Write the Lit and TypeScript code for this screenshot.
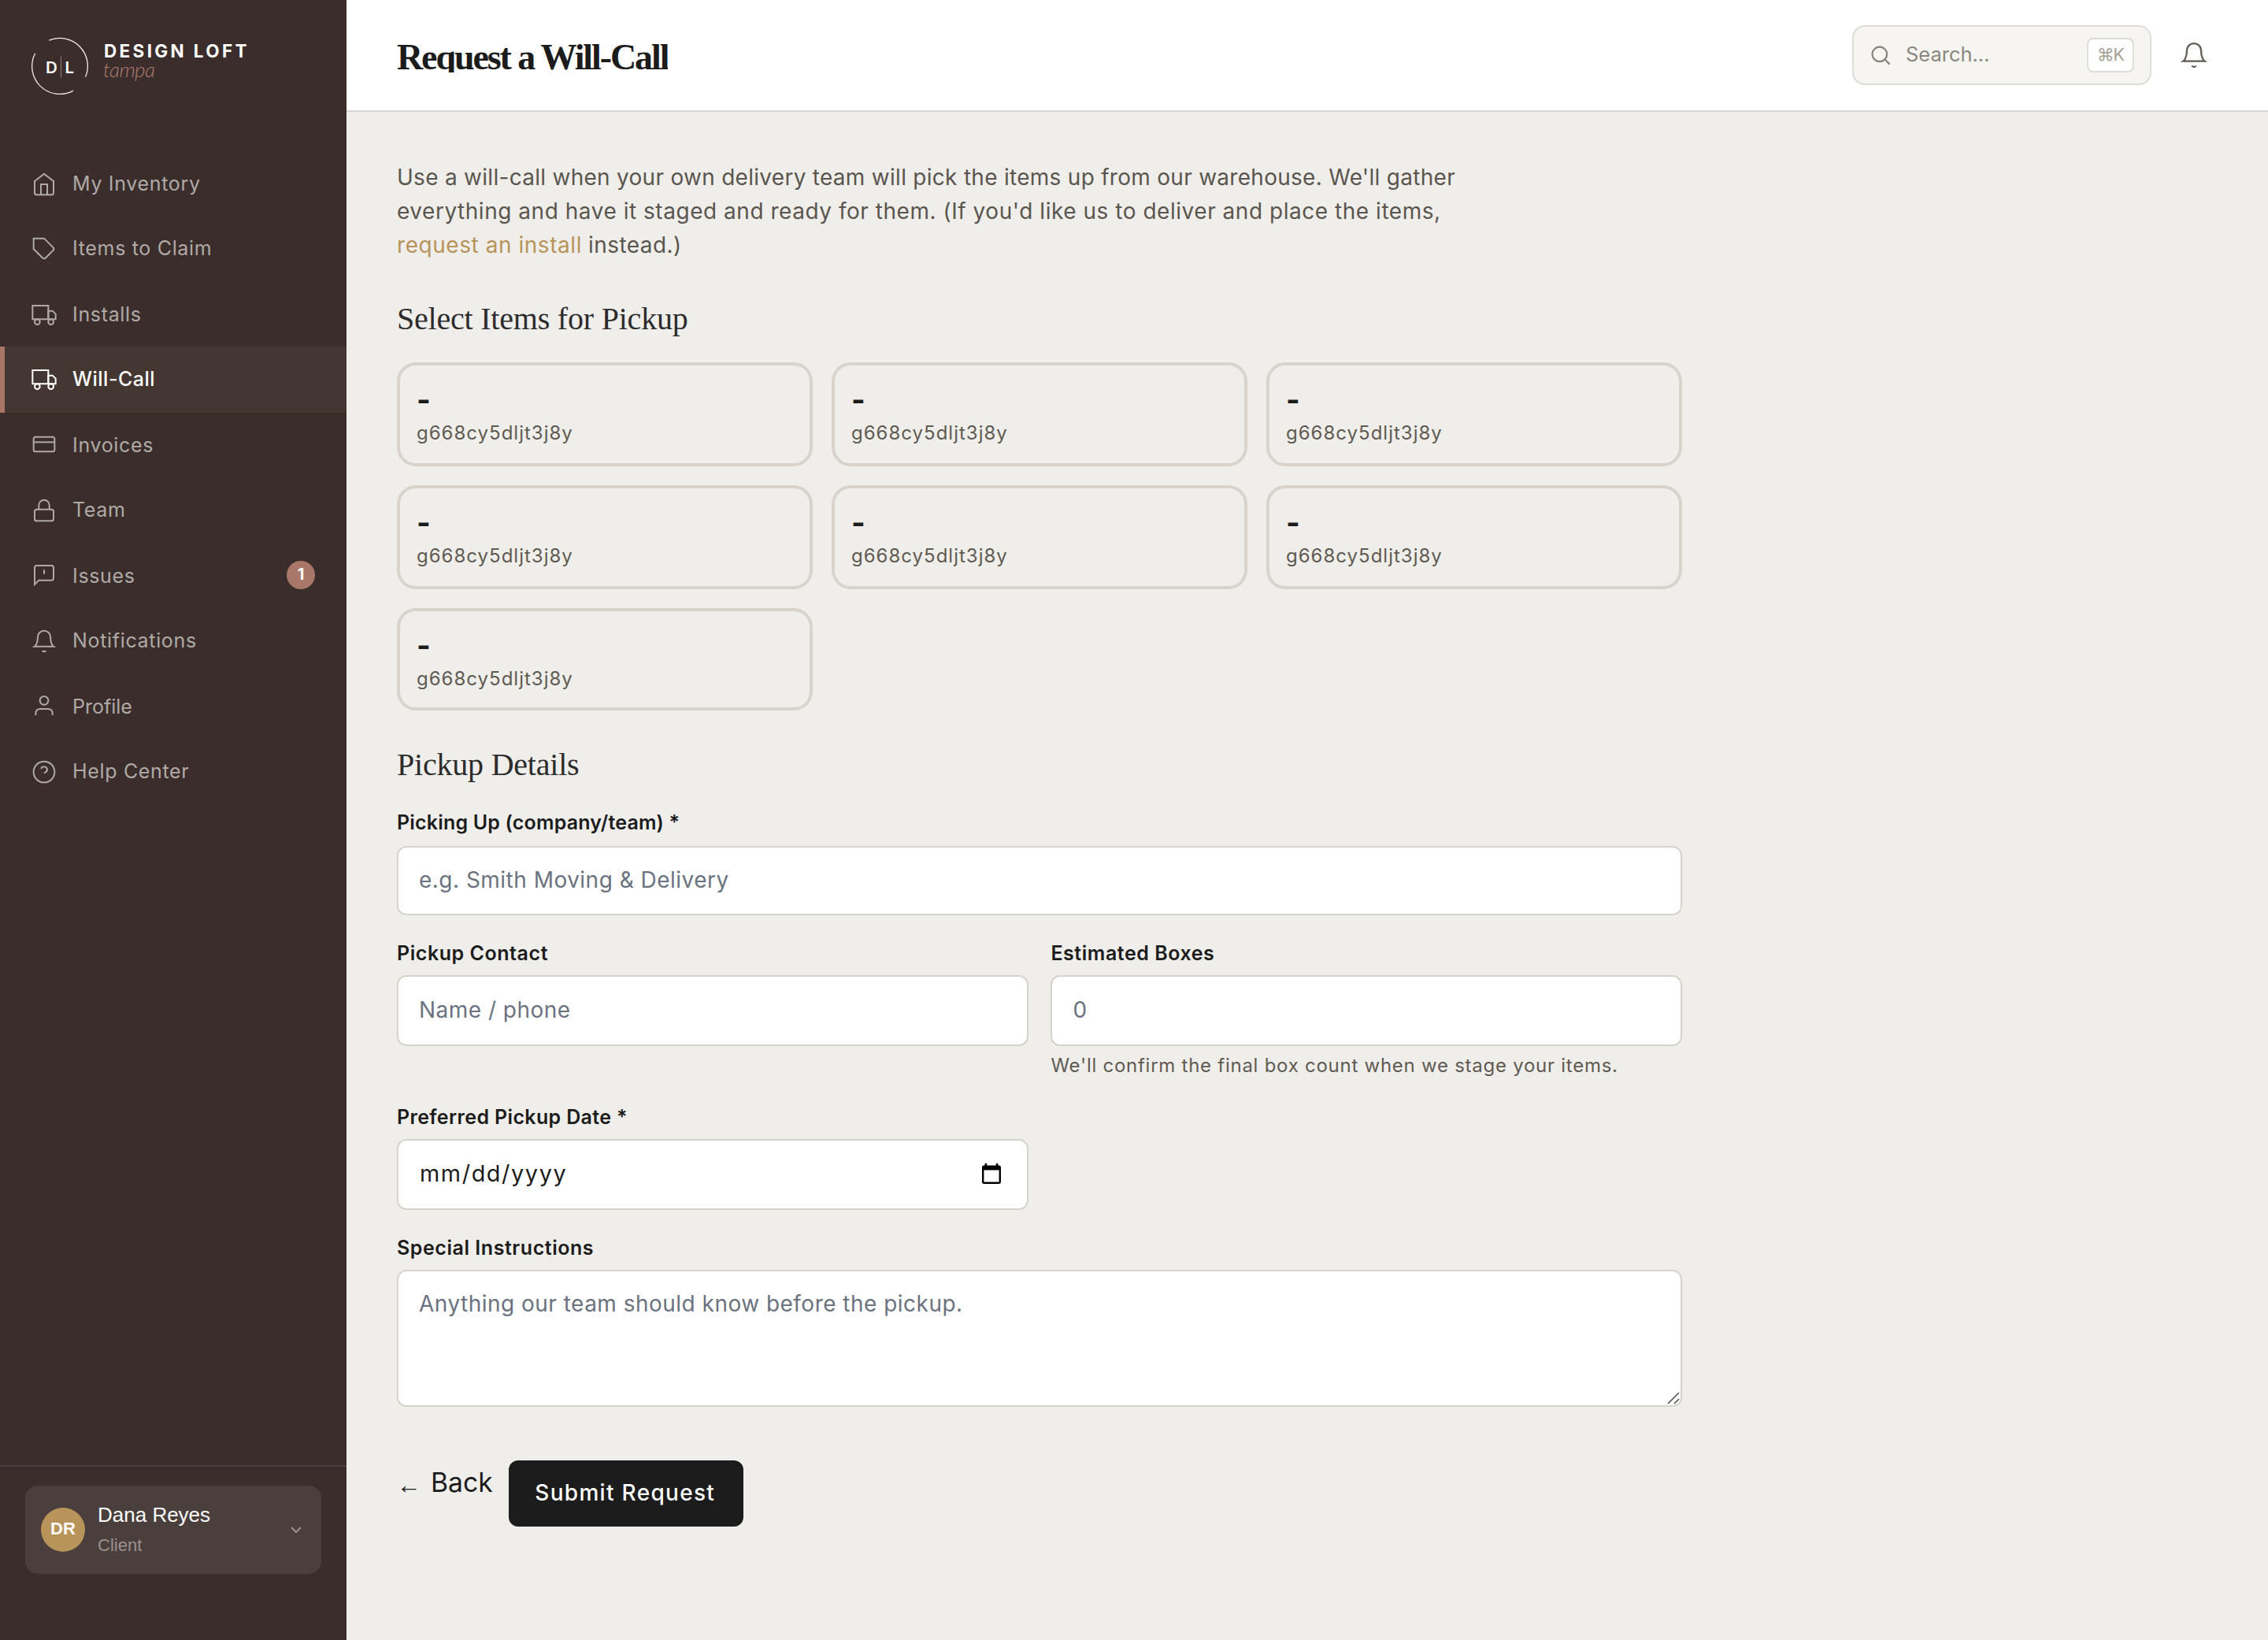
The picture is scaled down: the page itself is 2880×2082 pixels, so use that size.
import { LitElement, html, css, svg } from "lit";
import { customElement } from "lit/decorators.js";

const ICONS: Record<string, unknown> = {
  home: svg`<path d="M3 9l9-7 9 7v11a2 2 0 0 1-2 2H5a2 2 0 0 1-2-2z"/><path d="M9 22V12h6v10"/>`,
  tag: svg`<path d="M20.59 13.41l-7.17 7.17a2 2 0 0 1-2.83 0L2 12V2h10l8.59 8.59a2 2 0 0 1 0 2.82z"/>`,
  truck: svg`<path d="M1 3h15v13H1z"/><path d="M16 8h4l3 3v5h-7z"/><circle cx="5.5" cy="18.5" r="2.5"/><circle cx="18.5" cy="18.5" r="2.5"/>`,
  card: svg`<rect x="2" y="5" width="20" height="14" rx="2"/><path d="M2 10h20"/>`,
  lock: svg`<rect x="3" y="11" width="18" height="11" rx="2"/><path d="M7 11V7a5 5 0 0 1 10 0v4"/>`,
  message: svg`<path d="M21 15a2 2 0 0 1-2 2H7l-4 4V5a2 2 0 0 1 2-2h14a2 2 0 0 1 2 2z"/><path d="M12 7v4"/>`,
  bell: svg`<path d="M18 8A6 6 0 0 0 6 8c0 7-3 9-3 9h18s-3-2-3-9"/><path d="M13.73 21a2 2 0 0 1-3.46 0"/>`,
  user: svg`<path d="M20 21v-2a4 4 0 0 0-4-4H8a4 4 0 0 0-4 4v2"/><circle cx="12" cy="7" r="4"/>`,
  help: svg`<circle cx="12" cy="12" r="10"/><path d="M9.09 9a3 3 0 0 1 5.83 1c0 2-3 3-3 3"/>`,
};

const NAV = [
  { label: "My Inventory", icon: "home" },
  { label: "Items to Claim", icon: "tag" },
  { label: "Installs", icon: "truck" },
  { label: "Will-Call", icon: "truck", active: true },
  { label: "Invoices", icon: "card", raised: true },
  { label: "Team", icon: "lock" },
  { label: "Issues", icon: "message", raised: true, count: 1 },
  { label: "Notifications", icon: "bell" },
  { label: "Profile", icon: "user", raised: true, tight: true },
  { label: "Help Center", icon: "help" },
];

const ITEMS = Array.from({ length: 7 }, () => ({ name: "-", code: "g668cy5dljt3j8y" }));

@customElement("app-root")
export class AppRoot extends LitElement {
  static styles = css`
    :host { display: block; width: 2880px; height: 2082px; font-family: Inter, "Liberation Sans", sans-serif; color: #1c1c1c; }
    * { box-sizing: border-box; margin: 0; }
    span, h1, h2, label { white-space: nowrap; }
    .page { display: flex; width: 2880px; height: 2082px; background: #f0eeea; overflow: hidden; }
    .icon { fill: none; stroke: currentColor; stroke-width: 1.5; display: block; flex: none; }

    .sidebar { width: 440px; flex: none; display: flex; flex-direction: column; background: #3a2d2c; }
    .brand { height: 192px; padding: 48px 0 0 40px; display: flex; }
    .mark { width: 72px; height: 72px; flex: none; overflow: visible; }
    .ring { fill: none; stroke: #f3ece8; stroke-width: 1.3; }
    .mark-rule { stroke: #8d8583; stroke-width: 1; }
    .mark-letter { font: 600 20.5px Inter, sans-serif; fill: #fff; }
    .wordmark { display: flex; flex-direction: column; margin-left: 20px; }
    .brand-name { font-size: 22.5px; font-weight: 700; line-height: 26px; margin-top: 4px; color: #fff; letter-spacing: 3.35px; }
    .brand-city { font: italic 300 26px/22px Lato, cursive; color: #b07c6b; margin: -1px 0 0 -1px; letter-spacing: -0.6px; }
    .nav { display: flex; flex-direction: column; }
    .nav-item { height: 82px; display: flex; align-items: flex-start; padding: 0 40px; gap: 20px; color: #b0aaa7; }
    .nav-item:nth-child(even) { height: 84px; }
    .nav-item.active { background: #443630; color: #fff; box-shadow: inset 6px 0 #a97767; font-weight: 500; }
    .nav-icon { width: 32px; height: 32px; margin-top: 26px; }
    .nav-icon.raised { margin-top: 24px; }
    .nav-label { font-size: 25px; line-height: 40px; margin-top: 21px; letter-spacing: 0.67px; }
    .active .nav-label { letter-spacing: 0.48px; }
    .nav-label.tight { letter-spacing: 0; }
    .badge { width: 36px; height: 36px; border-radius: 50%; margin: 22px 0 0 auto; background: #a97767; color: #fff; font-size: 20px; font-weight: 700; line-height: 35px; text-align: center; }
    .account { margin-top: auto; height: 222px; border-top: 2px solid #4b403f; padding: 24px 32px 0; }
    .account-card { height: 112px; border-radius: 16px; background: #4a3f3c; display: flex; align-items: center; padding: 0 20px; font-family: "Liberation Sans", Arial, sans-serif; }
    .avatar { width: 56px; height: 56px; border-radius: 50%; background: #b8935a; color: #fff; font-size: 22px; font-weight: 700; line-height: 53px; text-align: center; }
    .who { display: flex; flex-direction: column; margin-left: 16px; }
    .who-name { font-size: 26px; line-height: 40px; color: #fff; }
    .who-role { font-size: 22px; line-height: 38px; color: #9a918f; }
    .chevron { width: 24px; height: 24px; margin-left: auto; color: #9a918f; stroke-width: 2; }

    .main { flex: 1; display: flex; flex-direction: column; }
    .topbar { height: 142px; background: #fff; border-bottom: 2px solid #d8d5cf; padding: 0 76px 0 64px; display: flex; align-items: flex-start; }
    .title { font: 700 46px/46px "Liberation Serif", serif; height: 42px; margin-top: 50px; overflow: hidden; letter-spacing: -2.1px; }
    .search { width: 380px; height: 76px; margin: 32px 36px 0 auto; border: 2px solid #dddcd7; border-radius: 16px; background: #f6f5f1; display: flex; align-items: center; padding: 0 20px; color: #8a877f; }
    .search-icon { width: 28px; height: 28px; stroke-width: 2; }
    .search-text { font-size: 25.5px; line-height: 40px; margin: -2px 0 0 18px; }
    .kbd { width: 60px; height: 44px; margin-left: auto; border: 2px solid #dddcd7; border-radius: 8px; background: #fff; font-size: 21.5px; line-height: 39px; text-align: center; color: #a39f94; letter-spacing: -1px; }
    .topbar-bell { width: 36px; height: 36px; margin-top: 52px; color: #5f5b54; }

    .content { padding: 62px 0 0 64px; width: 1696px; }
    .intro { font-size: 28px; line-height: 43px; color: #5a564f; display: flex; flex-direction: column; }
    .intro-first { letter-spacing: 0.28px; }
    .intro-second { letter-spacing: 0.53px; }
    .intro-last { display: flex; gap: 8px; letter-spacing: 0.45px; }
    .link { color: #b8935a; letter-spacing: 0.55px; }
    .section-title { font: 400 40px/48px "Liberation Serif", serif; color: #2c2c2c; margin-top: 48px; letter-spacing: -0.21px; }
    .items { display: grid; grid-template-columns: repeat(3, 1fr); grid-template-rows: 132px 132px 130px; gap: 24px; margin-top: 31px; }
    .item { border: 4px solid #d8d3cd; border-radius: 24px; padding: 23px 20px 0 21px; display: flex; flex-direction: column; gap: 6px; }
    .item-name { font-size: 38px; font-weight: 700; line-height: 40px; }
    .item-code { font-size: 24px; line-height: 34px; color: #5f5a52; letter-spacing: 1px; }
    .details-title { margin-top: 45px; }
    .fields { display: grid; grid-template-columns: 1fr 1fr; column-gap: 28.8px; row-gap: 30px; margin-top: 31px; }
    .field { display: flex; flex-direction: column; align-items: flex-start; }
    .wide { grid-column: 1 / -1; }
    .label { font-size: 25px; font-weight: 600; line-height: 36px; margin-bottom: 10px; letter-spacing: 0.55px; }
    .company .label { margin-bottom: 12px; letter-spacing: 0.18px; }
    .company .control { height: 88px; }
    .date .label { letter-spacing: 0.36px; }
    .control { width: 100%; height: 90px; border: 2px solid #d6d3cd; border-radius: 12px; background: #fff; padding: 0 26px 3px; font: 400 28px/43px Inter, sans-serif; letter-spacing: 0.48px; color: #1c1c1c; outline: none; display: flex; align-items: center; }
    .control::placeholder { color: #6b7280; opacity: 1; }
    .hint { font-size: 24px; line-height: 34px; color: #5f5a52; margin-top: 8px; letter-spacing: 0.74px; }
    .date-text { font-size: 28.8px; letter-spacing: 1.6px; margin-left: 1px; }
    .calendar { width: 24px; height: 26px; margin: 1px 7px 0 auto; }
    .area-wrap { position: relative; width: 100%; height: 174px; }
    .area { height: 174px; padding: 20px 26px; resize: none; display: block; }
    .grip { position: absolute; right: 3px; bottom: 3px; width: 16px; height: 16px; stroke: #55524d; stroke-width: 1.6; }
    .actions { display: flex; align-items: flex-start; margin-top: 68px; }
    .back { display: flex; margin-top: 3px; font-size: 33.7px; line-height: 50px; }
    .arrow { font: 31px/57px "Liberation Sans", sans-serif; width: 43px; }
    .submit { width: 298px; height: 84px; border: 0; border-radius: 12px; margin-left: 20px; padding: 0 2px 3px 0; background: #1c1c1c; color: #fff; font: 500 28px/40px Inter, sans-serif; letter-spacing: 1.3px; }
  `;

  private icon(name: string, cls: string) {
    return html`<svg class="icon ${cls}" viewBox="0 0 24 24">${ICONS[name]}</svg>`;
  }

  render() {
    return html`
      <div class="page">
        <aside class="sidebar">
          <div class="brand">
            <svg class="mark" viewBox="0 0 72 72">
              <path class="ring" d="M22.3 3.2A35.4 35.4 0 0 1 68.5 49.8"/>
              <path class="ring" d="M53 67.1A35.4 35.4 0 0 1 4.6 19.7"/>
              <path class="mark-rule" d="M37.4 23.5v27"/>
              <text class="mark-letter" x="18" y="44.6">D</text>
              <text class="mark-letter" x="42.4" y="44.6">L</text>
            </svg>
            <div class="wordmark">
              <span class="brand-name">DESIGN LOFT</span>
              <span class="brand-city">tampa</span>
            </div>
          </div>
          <nav class="nav">
            ${NAV.map((n) => html`
              <div class="nav-item ${n.active ? "active" : ""}">
                ${this.icon(n.icon, n.raised ? "nav-icon raised" : "nav-icon")}
                <span class="nav-label ${n.tight ? "tight" : ""}">${n.label}</span>
                ${n.count ? html`<span class="badge">${n.count}</span>` : ""}
              </div>`)}
          </nav>
          <div class="account">
            <div class="account-card">
              <div class="avatar">DR</div>
              <div class="who"><span class="who-name">Dana Reyes</span><span class="who-role">Client</span></div>
              <svg class="icon chevron" viewBox="0 0 24 24"><path d="M6 9l6 6 6-6"/></svg>
            </div>
          </div>
        </aside>
        <main class="main">
          <header class="topbar">
            <h1 class="title">Request a Will-Call</h1>
            <div class="search">
              <svg class="icon search-icon" viewBox="0 0 24 24"><circle cx="11" cy="11" r="8"/><path d="M22 22l-5-5"/></svg>
              <span class="search-text">Search…</span>
              <span class="kbd">⌘K</span>
            </div>
            ${this.icon("bell", "topbar-bell")}
          </header>
          <div class="content">
            <div class="intro">
              <span class="intro-first">Use a will-call when your own delivery team will pick the items up from our warehouse. We'll gather</span>
              <span class="intro-second">everything and have it staged and ready for them. (If you'd like us to deliver and place the items,</span>
              <span class="intro-last"><span class="link">request an install</span><span>instead.)</span></span>
            </div>
            <h2 class="section-title">Select Items for Pickup</h2>
            <div class="items">
              ${ITEMS.map((i) => html`<div class="item"><span class="item-name">${i.name}</span><span class="item-code">${i.code}</span></div>`)}
            </div>
            <h2 class="section-title details-title">Pickup Details</h2>
            <div class="fields">
              <div class="field wide company"><label class="label">Picking Up (company/team) *</label><input class="control" placeholder="e.g. Smith Moving &amp; Delivery"></div>
              <div class="field"><label class="label">Pickup Contact</label><input class="control" placeholder="Name / phone"></div>
              <div class="field"><label class="label">Estimated Boxes</label><input class="control" placeholder="0"><span class="hint">We'll confirm the final box count when we stage your items.</span></div>
              <div class="field date"><label class="label">Preferred Pickup Date *</label>
                <div class="control"><span class="date-text">mm/dd/yyyy</span>
                  <svg class="calendar" viewBox="0 0 24 26"><path fill-rule="evenodd" d="M3.6 0h2.6v2.6h11.6V0h2.6v2.6h1.2a2.4 2.4 0 0 1 2.4 2.4v18.6a2.4 2.4 0 0 1-2.4 2.4H2.4a2.4 2.4 0 0 1-2.4-2.4V5a2.4 2.4 0 0 1 2.4-2.4h1.2zM2.4 8.6v15h19.2v-15z"/></svg>
                </div></div>
              <div class="field wide"><label class="label">Special Instructions</label>
                <div class="area-wrap"><textarea class="control area" placeholder="Anything our team should know before the pickup."></textarea>
                  <svg class="grip" viewBox="0 0 16 16"><path d="M1 15L15 1M9 15l6-6"/></svg></div></div>
            </div>
            <div class="actions">
              <span class="back"><span class="arrow">←</span><span>Back</span></span>
              <button class="submit">Submit Request</button>
            </div>
          </div>
        </main>
      </div>`;
  }
}
